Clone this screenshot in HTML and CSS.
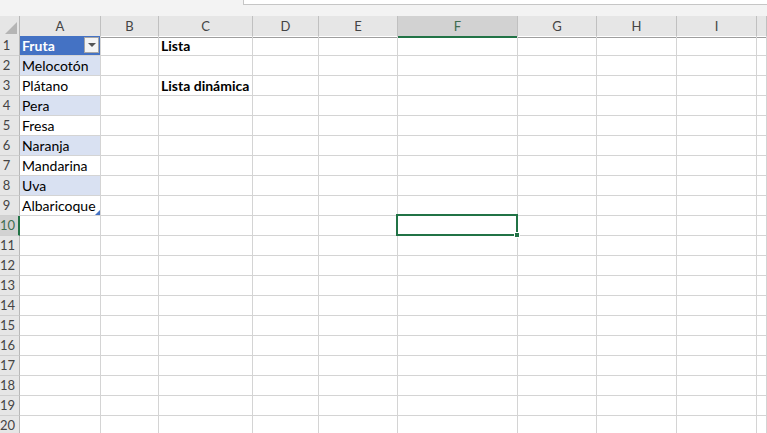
FILE: index.html
```html
<!DOCTYPE html>
<html lang="es">
<head>
    <meta charset="UTF-8">
    <title>Libro1 - Excel</title>
    <link rel="stylesheet" href="styles.css">
</head>
<body>
    <div class="topbar">
        <div class="formula"></div>
    </div>
    <div class="sheet">
        <div class="row head">
            <div class="corner"></div>
            <div>A</div><div>B</div><div>C</div><div>D</div><div>E</div>
            <div class="col-sel">F</div><div>G</div><div>H</div><div>I</div><div></div>
        </div>
        <div class="row">
            <div class="rh">1</div>
            <div class="tbl-head">Fruta<span class="filter"></span></div>
            <div></div><div class="bold">Lista</div><div></div><div></div><div></div><div></div><div></div><div></div><div></div>
        </div>
        <div class="row">
            <div class="rh">2</div>
            <div class="band">Melocotón</div>
            <div></div><div></div><div></div><div></div><div></div><div></div><div></div><div></div><div></div>
        </div>
        <div class="row">
            <div class="rh">3</div>
            <div>Plátano</div>
            <div></div><div class="bold">Lista dinámica</div><div></div><div></div><div></div><div></div><div></div><div></div><div></div>
        </div>
        <div class="row">
            <div class="rh">4</div>
            <div class="band">Pera</div>
            <div></div><div></div><div></div><div></div><div></div><div></div><div></div><div></div><div></div>
        </div>
        <div class="row">
            <div class="rh">5</div>
            <div>Fresa</div>
            <div></div><div></div><div></div><div></div><div></div><div></div><div></div><div></div><div></div>
        </div>
        <div class="row">
            <div class="rh">6</div>
            <div class="band">Naranja</div>
            <div></div><div></div><div></div><div></div><div></div><div></div><div></div><div></div><div></div>
        </div>
        <div class="row">
            <div class="rh">7</div>
            <div>Mandarina</div>
            <div></div><div></div><div></div><div></div><div></div><div></div><div></div><div></div><div></div>
        </div>
        <div class="row">
            <div class="rh">8</div>
            <div class="band">Uva</div>
            <div></div><div></div><div></div><div></div><div></div><div></div><div></div><div></div><div></div>
        </div>
        <div class="row">
            <div class="rh">9</div>
            <div class="tbl-end">Albaricoque<span class="resize"></span></div>
            <div></div><div></div><div></div><div></div><div></div><div></div><div></div><div></div><div></div>
        </div>
        <div class="row">
            <div class="rh row-sel">10</div>
            <div></div><div></div><div></div><div></div><div></div>
            <div class="active"><span class="cursor"><span class="handle"></span></span></div>
            <div></div><div></div><div></div><div></div>
        </div>
        <div class="row"><div class="rh">11</div><div></div><div></div><div></div><div></div><div></div><div></div><div></div><div></div><div></div><div></div></div>
        <div class="row"><div class="rh">12</div><div></div><div></div><div></div><div></div><div></div><div></div><div></div><div></div><div></div><div></div></div>
        <div class="row"><div class="rh">13</div><div></div><div></div><div></div><div></div><div></div><div></div><div></div><div></div><div></div><div></div></div>
        <div class="row"><div class="rh">14</div><div></div><div></div><div></div><div></div><div></div><div></div><div></div><div></div><div></div><div></div></div>
        <div class="row"><div class="rh">15</div><div></div><div></div><div></div><div></div><div></div><div></div><div></div><div></div><div></div><div></div></div>
        <div class="row"><div class="rh">16</div><div></div><div></div><div></div><div></div><div></div><div></div><div></div><div></div><div></div><div></div></div>
        <div class="row"><div class="rh">17</div><div></div><div></div><div></div><div></div><div></div><div></div><div></div><div></div><div></div><div></div></div>
        <div class="row"><div class="rh">18</div><div></div><div></div><div></div><div></div><div></div><div></div><div></div><div></div><div></div><div></div></div>
        <div class="row"><div class="rh">19</div><div></div><div></div><div></div><div></div><div></div><div></div><div></div><div></div><div></div><div></div></div>
        <div class="row"><div class="rh">20</div><div></div><div></div><div></div><div></div><div></div><div></div><div></div><div></div><div></div><div></div></div>
    </div>
</body>
</html>
```

FILE: styles.css
```css
*{
    margin: 0;
    padding: 0;
    box-sizing: border-box;
}
html,body{
    overflow: hidden;
    background: #ffffff;
}
body{
    font-family: Lato, "Liberation Sans", sans-serif;
    font-size: 14px;
    color: #000000;
}
.topbar{
    height: 16px;
    background: #f3f3f3;
    padding-left: 243px;
}
.formula{
    height: 5px;
    background: #ffffff;
    border-left: 1px solid #c6c6c6;
    border-bottom: 1px solid #c6c6c6;
}
.row{
    display: grid;
    grid-template-columns: 20px 81px 58px 94px 66px 79px 120px 79px 80px 80px 1fr;
    height: 20px;
}
.row > div{
    position: relative;
    border-right: 1px solid #d4d4d4;
    border-bottom: 1px solid #d4d4d4;
    padding: 0 2px;
    line-height: 19px;
    white-space: nowrap;
}
/* column headers */
.head{
    background: #e6e6e6;
}
.head > div{
    text-align: center;
    font-size: 13px;
    color: #444444;
    border-right-color: #c0c0c0;
    border-bottom-color: #9e9e9e;
    line-height: 20px;
}
.head .corner{
    border-right-color: #b8b8b8;
}
.corner::after{
    content: '';
    position: absolute;
    right: 2px;
    bottom: 3px;
    width: 12px;
    height: 12px;
    background: #b5b5b5;
    clip-path: polygon(100% 0, 100% 100%, 0 100%);
}
.head .col-sel{
    background: #d2d2d2;
    color: #3f6d50;
    border-bottom: 2px solid #217346;
}
/* row headers */
.row > .rh{
    background: #e6e6e6;
    color: #444444;
    font-size: 13px;
    text-align: center;
    padding: 0 6px 0 0;
    border-right-color: #b8b8b8;
    border-bottom-color: #d0d0d0;
}
.row > .row-sel{
    background: #d2d2d2;
    color: #3f6d50;
    border-right: 2px solid #217346;
}
/* table */
.row > .tbl-head{
    background: #4472c4;
    color: #ffffff;
    font-weight: bold;
}
.band{
    background: #d9e1f2;
}
.bold{
    font-weight: bold;
}
.filter{
    position: absolute;
    right: 1px;
    top: 1px;
    width: 15px;
    height: 16px;
    background: #f4f4f4;
    border: 1px solid #a6a6a6;
}
.filter::after{
    content: '';
    position: absolute;
    left: 3px;
    top: 5px;
    border-left: 4px solid transparent;
    border-right: 4px solid transparent;
    border-top: 4px solid #555555;
}
.resize{
    position: absolute;
    right: 0;
    bottom: 0;
    width: 5px;
    height: 5px;
    background: #4472c4;
    clip-path: polygon(100% 0, 100% 100%, 0 100%);
}
/* selected cell */
.cursor{
    position: absolute;
    left: -2px;
    top: -2px;
    right: -1px;
    bottom: -1px;
    border: 2px solid #217346;
    z-index: 2;
}
.handle{
    position: absolute;
    right: -4px;
    bottom: -4px;
    width: 6px;
    height: 6px;
    background: #217346;
    border: 1px solid #ffffff;
}
```
